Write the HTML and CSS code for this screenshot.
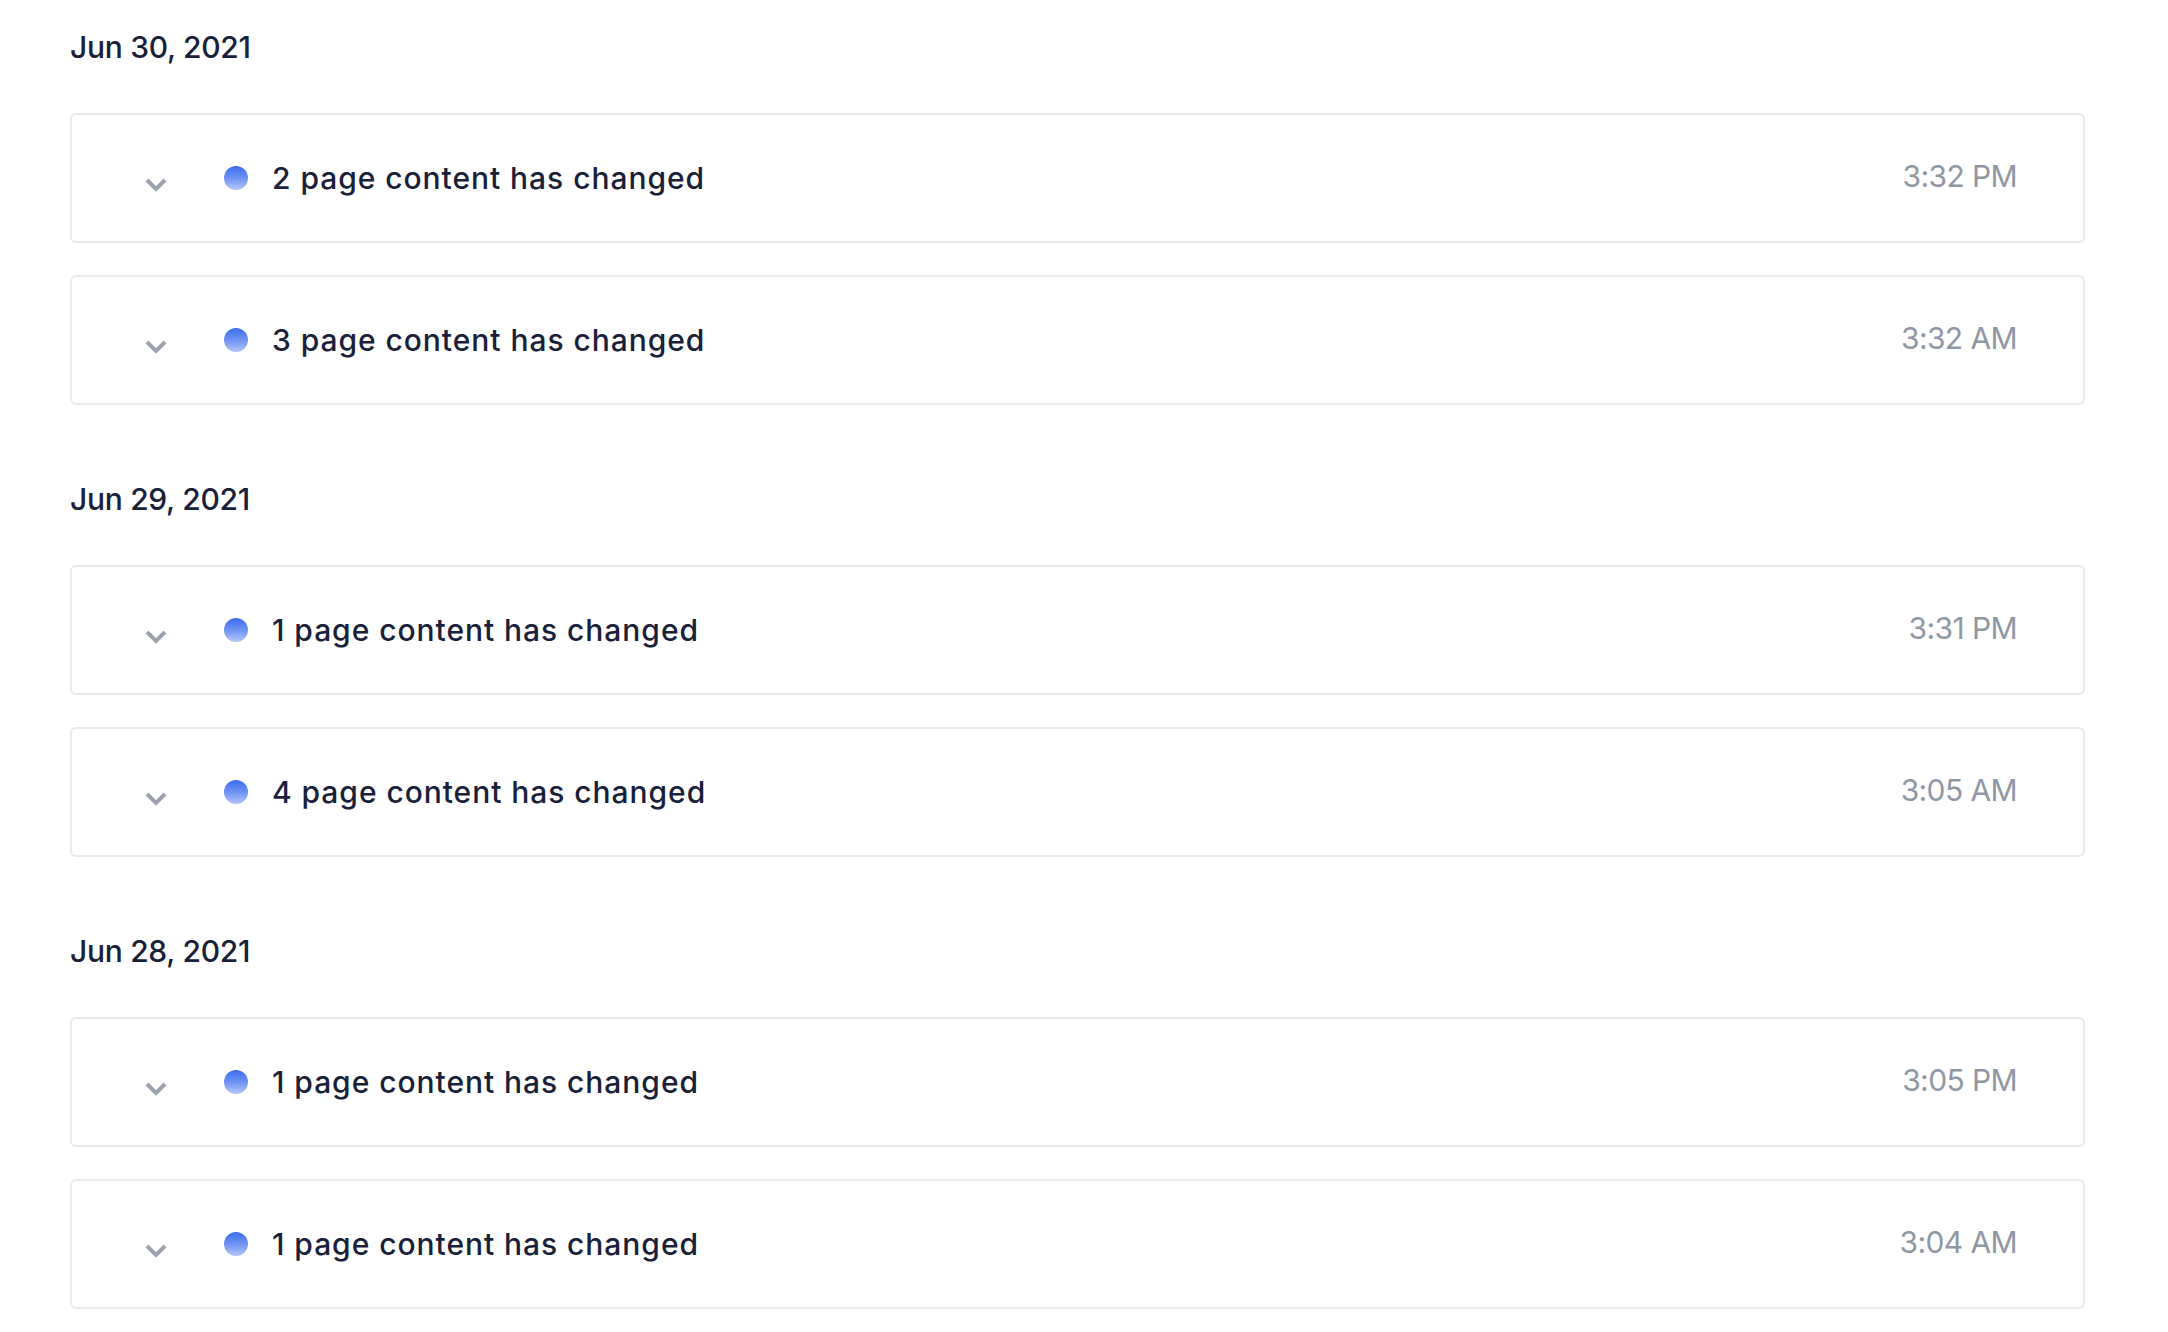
FILE: index.html
```html
<!DOCTYPE html>
<html lang="en">
<head>
<meta charset="utf-8">
<title>Changes</title>
<link rel="stylesheet" href="styles.css">
</head>
<body>
<main class="timeline">
  <section class="group">
    <h2 class="date">Jun 30, 2021</h2>
    <ul class="list">
      <li class="card"><svg class="chev" viewBox="0 0 22 14"><polyline points="2,2 11,11 20,2"/></svg><span class="dot"></span><span class="title">2 page content has changed</span><span class="time">3:32 PM</span></li>
      <li class="card"><svg class="chev" viewBox="0 0 22 14"><polyline points="2,2 11,11 20,2"/></svg><span class="dot"></span><span class="title">3 page content has changed</span><span class="time">3:32 AM</span></li>
    </ul>
  </section>
  <section class="group">
    <h2 class="date">Jun 29, 2021</h2>
    <ul class="list">
      <li class="card"><svg class="chev" viewBox="0 0 22 14"><polyline points="2,2 11,11 20,2"/></svg><span class="dot"></span><span class="title">1 page content has changed</span><span class="time">3:31 PM</span></li>
      <li class="card"><svg class="chev" viewBox="0 0 22 14"><polyline points="2,2 11,11 20,2"/></svg><span class="dot"></span><span class="title">4 page content has changed</span><span class="time">3:05 AM</span></li>
    </ul>
  </section>
  <section class="group">
    <h2 class="date">Jun 28, 2021</h2>
    <ul class="list">
      <li class="card"><svg class="chev" viewBox="0 0 22 14"><polyline points="2,2 11,11 20,2"/></svg><span class="dot"></span><span class="title">1 page content has changed</span><span class="time">3:05 PM</span></li>
      <li class="card"><svg class="chev" viewBox="0 0 22 14"><polyline points="2,2 11,11 20,2"/></svg><span class="dot"></span><span class="title">1 page content has changed</span><span class="time">3:04 AM</span></li>
    </ul>
  </section>
</main>
</body>
</html>
```

FILE: styles.css
```css
html, body {
  margin: 0;
  padding: 0;
  background: #ffffff;
}
body {
  font-family: Inter, "Noto Sans", sans-serif;
  color: #19203a;
}
.timeline {
  padding: 27px 83px 0 70px;
  display: flex;
  flex-direction: column;
  gap: 74px;
}
.date {
  margin: 0 0 46px 0;
  font-size: 30px;
  line-height: 40px;
  font-weight: 500;
  letter-spacing: -0.3px;
  color: #19203a;
}
.list {
  list-style: none;
  margin: 0;
  padding: 0;
  display: flex;
  flex-direction: column;
  gap: 32px;
}
.card {
  box-sizing: border-box;
  height: 130px;
  border: 2px solid #e9eaed;
  border-radius: 6px;
  display: flex;
  align-items: center;
  padding: 0 66px 0 73px;
}
.chev {
  width: 22px;
  height: 14px;
  margin-top: 14px;
  flex: none;
  fill: none;
  stroke: #9ca2ad;
  stroke-width: 4;
  stroke-linecap: butt;
  stroke-linejoin: miter;
}
.dot {
  width: 24px;
  height: 24px;
  border-radius: 50%;
  margin-left: 57px;
  flex: none;
  background: linear-gradient(180deg, #3a6cf0 0%, #6f93f3 50%, #b3c6f8 100%);
}
.title {
  margin-left: 24px;
  font-size: 30px;
  font-weight: 500;
  line-height: 40px;
  letter-spacing: 0.95px;
  color: #19203a;
}
.time {
  margin-left: auto;
  font-size: 30px;
  font-weight: 400;
  line-height: 40px;
  letter-spacing: -0.6px;
  color: #8f97a4;
  margin-top: -4px;
}
```
